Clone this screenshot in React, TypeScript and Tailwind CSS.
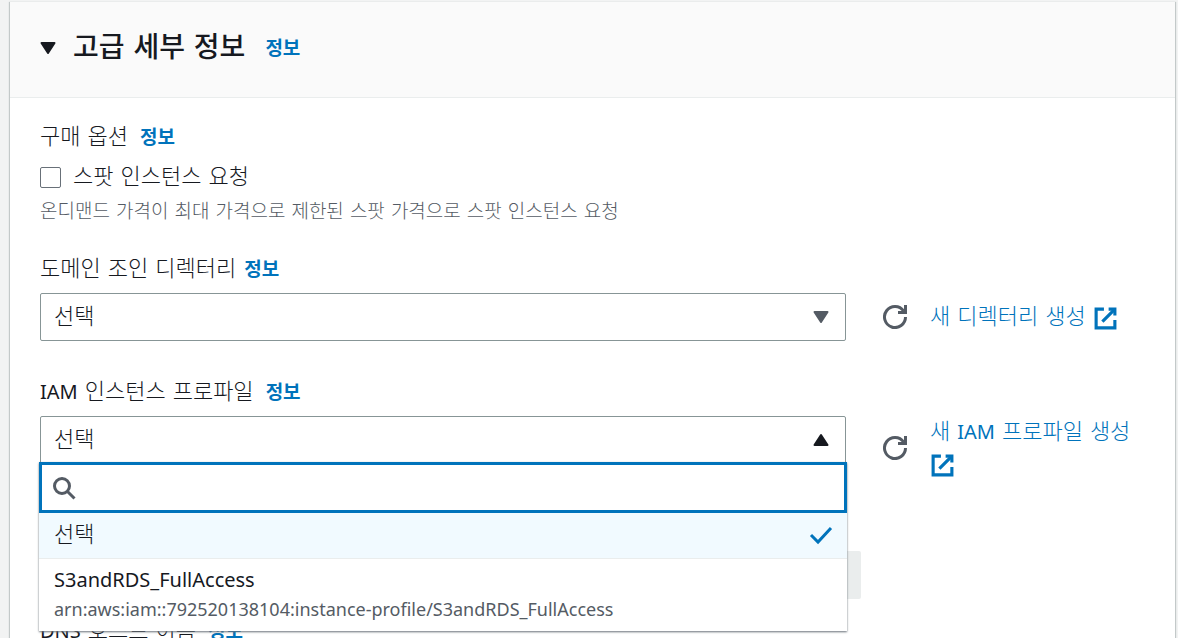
import { useState } from 'react'

const profiles = [
  {
    name: 'S3andRDS_FullAccess',
    arn: 'arn:aws:iam::792520138104:instance-profile/S3andRDS_FullAccess',
  },
]

function ExternalIcon() {
  return (
    <svg viewBox="0 0 16 16" className="inline-block size-[25px] align-middle" fill="none" stroke="currentColor" strokeWidth="2" aria-hidden="true">
      <path d="M10 2h4v4" />
      <path d="M6 10l8-8" />
      <path d="M14 9v5H2V2h5" />
    </svg>
  )
}

function RefreshButton({ label }: { label: string }) {
  return (
    <button type="button" aria-label={label} className="w-6 shrink-0 text-[#545b64]">
      <svg viewBox="0 0 16 16" className="size-6" fill="none" stroke="currentColor" strokeWidth="2" aria-hidden="true">
        <path d="M10 5h5V0" />
        <path d="M15 8A7 7 0 1 1 13.740 4" />
      </svg>
    </button>
  )
}

function Triangle({ up = false, className = '' }: { up?: boolean; className?: string }) {
  return (
    <svg viewBox="0 0 16 14" className={`h-[14px] w-4 ${className}`} fill="currentColor" stroke="currentColor" strokeWidth="2" strokeLinejoin="round" aria-hidden="true">
      <path d={up ? 'M1.500 12h13L8 2z' : 'M1.500 2h13L8 12z'} />
    </svg>
  )
}

function InfoLink({ className = '' }: { className?: string }) {
  return (
    <a href="#info" className={`text-[19px] font-bold text-[#0073bb] ${className}`}>
      정보
    </a>
  )
}

// Latin words inside Korean labels
function Latin({ children }: { children: string }) {
  return <span className="font-['Noto_Sans',sans-serif] text-xl font-normal">{children}</span>
}

export default function App() {
  const [open, setOpen] = useState(true)
  const [query, setQuery] = useState('')

  return (
    <div
      lang="ko"
      className="h-screen overflow-hidden bg-[#f2f3f3] pt-[2px] pr-[3px] pl-[10px] font-['DejaVu_Sans','Noto_Sans_CJK_KR',sans-serif] text-[22px] leading-8 font-light text-[#16191f]"
    >
      <section className="min-h-screen bg-white shadow-[0_1px_1px_1px_#c3c9c9]">
        <header className="border-b border-[#eaeded] bg-[#fafafa] px-[30px] pt-[26px] pb-[29px]">
          <h2 className="flex items-center leading-10">
            <button type="button" className="flex items-center gap-[17px] text-[28px] font-medium">
              <Triangle />
              고급 세부 정보
            </button>
            <InfoLink className="ml-5" />
          </h2>
        </header>

        <div className="px-[30px] pt-[23px]">
          <div className="flex items-center gap-3">
            <span>구매 옵션</span>
            <InfoLink />
          </div>
          <label className="mt-2 flex items-center gap-3">
            <input
              type="checkbox"
              className="size-[21px] appearance-none rounded-[2px] border border-[#687078] bg-white checked:bg-[#0073bb]"
            />
            스팟 인스턴스 요청
          </label>
          <p className="mt-1 text-[19px] leading-7 text-[#545b64]">
            온디맨드 가격이 최대 가격으로 제한된 스팟 가격으로 스팟 인스턴스 요청
          </p>

          {/* Directory */}
          <div className="mt-7 flex items-center gap-2">
            <label htmlFor="directory">도메인 조인 디렉터리</label>
            <InfoLink />
          </div>
          <div className="mt-2 grid grid-cols-[1fr_262px] items-center gap-[37px]">
            <div className="relative">
              <select
                id="directory"
                className="block h-12 w-full appearance-none rounded-[2px] border border-[#879596] bg-white px-[13px]"
              >
                <option>선택</option>
              </select>
              <Triangle className="pointer-events-none absolute top-[17px] right-[17px] text-[#545b64]" />
            </div>
            <div className="flex items-center gap-[23px]">
              <RefreshButton label="디렉터리 새로 고침" />
              <a href="#directory" className="text-[#0073bb]">
                새 디렉터리 생성 <ExternalIcon />
              </a>
            </div>
          </div>

          {/* IAM profile */}
          <div className="mt-[35px] flex items-center gap-3">
            <span id="iam-label">
              <Latin>IAM</Latin> 인스턴스 프로파일
            </span>
            <InfoLink />
          </div>
          <div className="mt-2 grid h-16 grid-cols-[1fr_262px] items-center gap-[37px]">
            <div className="relative self-start">
              <button
                type="button"
                aria-expanded={open}
                aria-labelledby="iam-label"
                onClick={() => setOpen(!open)}
                className="flex h-12 w-full items-center justify-between rounded-[2px] border border-[#879596] bg-white pr-4 pl-[13px]"
              >
                선택
                <Triangle up />
              </button>
              {open && (
                <div className="absolute inset-x-[-1px] top-[46px] z-10 bg-white shadow-[0_1px_2px_#687078]">
                  <div className="flex h-[51px] items-center border-[3px] border-[#0073bb] px-[10px]">
                    <svg viewBox="0 0 24 24" className="size-6 text-[#545b64]" fill="none" stroke="currentColor" strokeWidth="3" aria-hidden="true">
                      <circle cx="10" cy="10" r="7.500" />
                      <path d="M15.500 15.500l7 7" />
                    </svg>
                    <input
                      type="text"
                      aria-label="프로파일 검색"
                      value={query}
                      onChange={(e) => setQuery(e.target.value)}
                      className="min-w-0 flex-1 px-2 outline-none"
                    />
                  </div>
                  <ul role="listbox" aria-labelledby="iam-label">
                    <li
                      role="option"
                      aria-selected="true"
                      className="flex h-[46px] items-center justify-between border-b border-[#eaeded] bg-[#f1faff] pr-[14px] pb-[2px] pl-[15px]"
                    >
                      선택
                      <svg viewBox="0 0 24 24" className="size-6 text-[#0073bb]" fill="none" stroke="currentColor" strokeWidth="3" aria-hidden="true">
                        <path d="M2 12l7 7L22 5" />
                      </svg>
                    </li>
                    {profiles.filter((p) => p.name.includes(query)).map((p) => (
                      <li
                        key={p.arn}
                        role="option"
                        aria-selected="false"
                        className="px-[15px] pt-[6px] pb-2 font-['Noto_Sans',sans-serif] font-normal"
                      >
                        <div className="text-xl leading-[30px]">{p.name}</div>
                        <div className="text-[18px] leading-7 text-[#545b64]">{p.arn}</div>
                      </li>
                    ))}
                  </ul>
                </div>
              )}
            </div>
            <div className="flex items-center gap-[23px]">
              <RefreshButton label="프로파일 새로 고침" />
              <a href="#iam" className="text-[#0073bb]">
                새 <Latin>IAM</Latin> 프로파일 생성 <ExternalIcon />
              </a>
            </div>
          </div>

          <div className="mt-[71px] mr-[284px]">
            <button type="button" disabled aria-label="호스트 이름 유형" className="block h-12 w-full rounded-[2px] bg-[#eaeded]" />
          </div>
          <div className="mt-4 flex items-center gap-3">
            <span>
              <Latin>DNS</Latin> 호스트 이름
            </span>
            <InfoLink />
          </div>
        </div>
      </section>
    </div>
  )
}
